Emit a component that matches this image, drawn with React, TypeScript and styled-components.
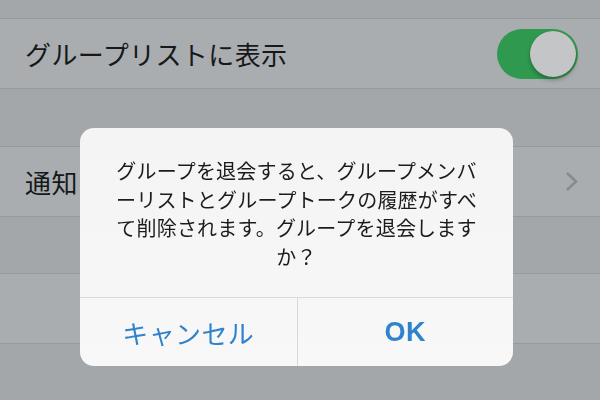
import styled, { createGlobalStyle } from 'styled-components';

/* —— palette (dimmed behind the alert) —— */
const gapBg   = '#a3a7aa';
const rowBg   = '#a9adb0';
const sepCol  = '#959a9d';
const txtDim  = '#16181a';
const green   = '#2f9a4f';
const knob    = '#c3c5c6';
const chevron = '#878b8e';
const alertBg = '#f6f6f6';
const alertSep = '#d9d9d9';
const blue    = '#2f82cc';

const jp = `"Noto Sans CJK JP", "Noto Sans", sans-serif`;

const Global = createGlobalStyle`
  html, body { margin: 0; padding: 0; }
  body {
    width: 600px;
    height: 400px;
    overflow: hidden;
    background: ${gapBg};
    font-family: ${jp};
  }
`;

/* —— settings list —— */
const Page = styled.div`
  display: flex;
  flex-direction: column;
  height: 400px;
  background: ${gapBg};
`;
const Gap = styled.div<{ $h: number }>`
  height: ${p => p.$h}px;
  flex-shrink: 0;
`;
const Section = styled.section`
  border-top: 1px solid ${sepCol};
  border-bottom: 1px solid ${sepCol};
  background: ${rowBg};
`;
const Row = styled.div`
  height: 69px;
  display: flex;
  align-items: center;
  justify-content: space-between;
  padding: 0 22px 0 25px;
`;
const Label = styled.span`
  font-size: 26px;
  color: ${txtDim};
  letter-spacing: 0.4px;
`;

/* —— switch —— */
const Switch = styled.div`
  position: relative;
  width: 81px;
  height: 50px;
  border-radius: 25px;
  background: ${green};
`;
const Knob = styled.div`
  position: absolute;
  right: 2px;
  top: 2px;
  width: 46px;
  height: 46px;
  border-radius: 50%;
  background: ${knob};
  box-shadow: 0 3px 4px rgba(0,0,0,.28), 0 0 1px rgba(0,0,0,.2);
`;

/* —— alert —— */
const Overlay = styled.div`
  position: fixed;
  inset: 0;
  display: flex;
  align-items: flex-start;
  padding: 128px 0 0 80px;
`;
const Alert = styled.div`
  width: 433px;
  border-radius: 14px;
  overflow: hidden;
  background: linear-gradient(180deg, #f4f4f4 0%, ${alertBg} 60%, #f8f8f8 100%);
`;
const Message = styled.p`
  margin: 0;
  height: 170px;
  box-sizing: border-box;
  padding: 29px 20px 0;
  text-align: center;
  font-size: 20px;
  line-height: 28.5px;
  letter-spacing: 0.2px;
  color: #1b1b1b;
  border-bottom: 1px solid ${alertSep};
`;
const Buttons = styled.div`
  display: grid;
  grid-template-columns: 1fr 1fr;
  height: 68px;
`;
const Button = styled.button<{ $bold?: boolean }>`
  border: 0;
  background: transparent;
  font-family: ${p => (p.$bold ? `"Liberation Sans", Arial, sans-serif` : jp)};
  font-size: ${p => (p.$bold ? '27px' : '26px')};
  font-weight: ${p => (p.$bold ? 700 : 400)};
  color: ${blue};
  letter-spacing: 0.4px;
  padding: 0;
  & + & { border-left: 1px solid ${alertSep}; }
`;

function Chevron() {
  return (
    <svg width="13" height="21" viewBox="0 0 13 21">
      <path d="M2 2l9 8.5L2 19" fill="none" stroke={chevron} strokeWidth="2.6" />
    </svg>
  );
}

export default function App() {
  return (
    <>
      <Global />
      <Page>
        <Gap $h={18} />
        <Section>
          <Row>
            <Label>グループリストに表示</Label>
            <Switch><Knob /></Switch>
          </Row>
        </Section>
        <Gap $h={57} />
        <Section>
          <Row>
            <Label>通知</Label>
            <Chevron />
          </Row>
        </Section>
        <Gap $h={56} />
        <Section>
          <Row />
        </Section>
      </Page>

      <Overlay>
        <Alert>
          <Message>
            グループを退会すると、グループメンバ<br />
            ーリストとグループトークの履歴がすべ<br />
            て削除されます。グループを退会します<br />
            か？
          </Message>
          <Buttons>
            <Button>キャンセル</Button>
            <Button $bold>OK</Button>
          </Buttons>
        </Alert>
      </Overlay>
    </>
  );
}
